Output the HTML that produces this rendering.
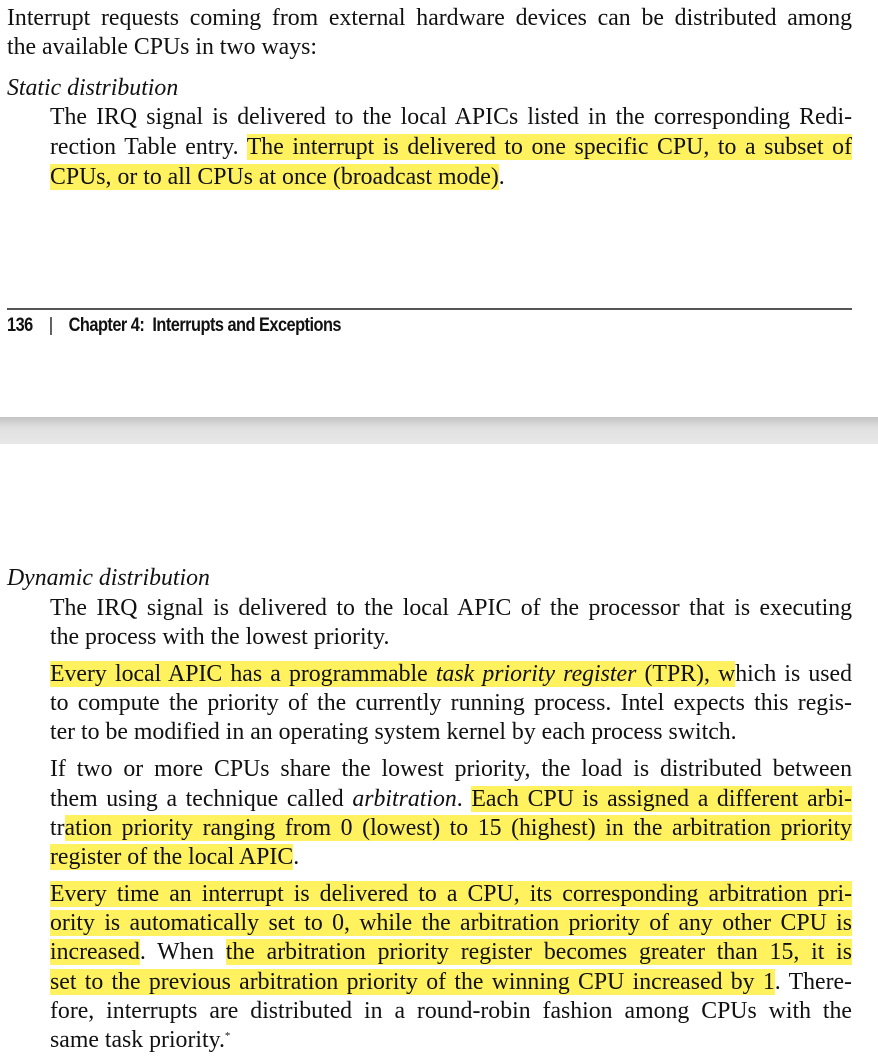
<!DOCTYPE html>
<html><head><meta charset="utf-8"><style>
html,body{margin:0;padding:0;background:#fff;}
body{width:878px;height:1062px;position:relative;overflow:hidden;font-family:"Liberation Serif",serif;color:#111;}
.l{position:absolute;height:30px;line-height:30px;font-size:23.8px;white-space:nowrap;}
.j{text-align:justify;text-align-last:justify;white-space:normal;}
.a{left:7px;width:845px;}
.b{left:50px;width:802px;}
.h{background:#fff25e;}
i{font-style:italic;}
sup{line-height:0;font-size:11px;vertical-align:8px;}
.rule{position:absolute;left:7px;width:845px;top:308px;height:2px;background:#555;}
.foot{position:absolute;top:315px;left:7px;font-family:"Liberation Sans",sans-serif;font-weight:bold;font-size:19px;letter-spacing:-0.6px;transform:scaleX(0.86);transform-origin:left;color:#111;white-space:nowrap;}
.band{position:absolute;left:0;width:878px;top:417px;height:27px;background:linear-gradient(#c4c4c4,#e0e0e0 40%,#e8e8e8);}
</style></head><body>
<div class="l a j" style="top:3px">Interrupt requests coming from external hardware devices can be distributed among</div>
<div class="l a" style="top:32px">the available CPUs in two ways:</div>
<div class="l a" style="top:73px"><i>Static distribution</i></div>
<div class="l b j" style="top:102px">The IRQ signal is delivered to the local APICs listed in the corresponding Redi-</div>
<div class="l b j" style="top:132px">rection Table entry. <span class="h">The interrupt is delivered to one specific CPU, to a subset of</span></div>
<div class="l b" style="top:162px"><span class="h">CPUs, or to all CPUs at once (broadcast mode)</span>.</div>

<div class="rule"></div>
<div class="foot">136&nbsp;&nbsp;&nbsp;&nbsp;<span style="font-weight:normal">|</span>&nbsp;&nbsp;&nbsp;&nbsp;Chapter 4:&nbsp;&nbsp;Interrupts and Exceptions</div>
<div class="band"></div>

<div class="l a" style="top:563px"><i>Dynamic distribution</i></div>
<div class="l b j" style="top:593px">The IRQ signal is delivered to the local APIC of the processor that is executing</div>
<div class="l b" style="top:622px">the process with the lowest priority.</div>
<div class="l b j" style="top:659px"><span class="h">Every local APIC has a programmable <i>task priority register</i> (TPR), w</span>hich is used</div>
<div class="l b j" style="top:688px">to compute the priority of the currently running process. Intel expects this regis-</div>
<div class="l b" style="top:717px">ter to be modified in an operating system kernel by each process switch.</div>
<div class="l b j" style="top:754px">If two or more CPUs share the lowest priority, the load is distributed between</div>
<div class="l b j" style="top:784px">them using a technique called <i>arbitration</i>. <span class="h">Each CPU is assigned a different arbi-</span></div>
<div class="l b j" style="top:813px">tr<span class="h">ation priority ranging from 0 (lowest) to 15 (highest) in the arbitration priority</span></div>
<div class="l b" style="top:842px"><span class="h">register of the local APIC</span>.</div>
<div class="l b j" style="top:879px"><span class="h">Every time an interrupt is delivered to a CPU, its corresponding arbitration pri-</span></div>
<div class="l b j" style="top:908px"><span class="h">ority is automatically set to 0, while the arbitration priority of any other CPU is</span></div>
<div class="l b j" style="top:937px"><span class="h">increased</span>. When <span class="h">the arbitration priority register becomes greater than 15, it is</span></div>
<div class="l b j" style="top:967px"><span class="h">set to the previous arbitration priority of the winning CPU increased by 1</span>. There-</div>
<div class="l b j" style="top:996px">fore, interrupts are distributed in a round-robin fashion among CPUs with the</div>
<div class="l b" style="top:1025px">same task priority.<sup>*</sup></div>
</body></html>
